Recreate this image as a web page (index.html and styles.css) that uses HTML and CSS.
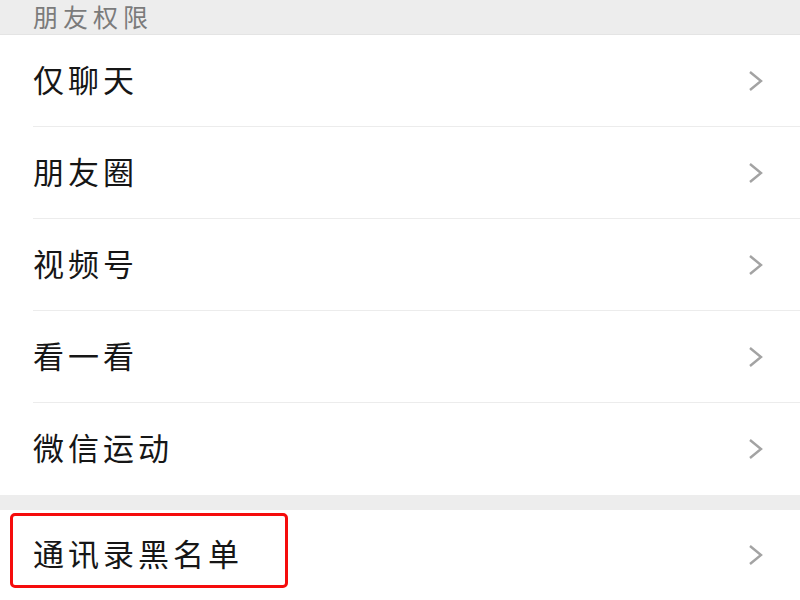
FILE: index.html
```html
<!DOCTYPE html>
<html lang="zh-CN">
<head>
<meta charset="UTF-8" />
<meta name="viewport" content="width=device-width, initial-scale=1" />
<title>朋友权限</title>
<link rel="stylesheet" href="styles.css">
</head>
<body>
<div class="page">
  <div class="section-title">朋友权限</div>
  <ul class="group">
    <li class="row"><span class="label">仅聊天</span><svg class="chevron" viewBox="0 0 16 22"><path d="M2 2 L13 11 L2 20"/></svg></li>
    <li class="row"><span class="label">朋友圈</span><svg class="chevron" viewBox="0 0 16 22"><path d="M2 2 L13 11 L2 20"/></svg></li>
    <li class="row"><span class="label">视频号</span><svg class="chevron" viewBox="0 0 16 22"><path d="M2 2 L13 11 L2 20"/></svg></li>
    <li class="row"><span class="label">看一看</span><svg class="chevron" viewBox="0 0 16 22"><path d="M2 2 L13 11 L2 20"/></svg></li>
    <li class="row"><span class="label">微信运动</span><svg class="chevron" viewBox="0 0 16 22"><path d="M2 2 L13 11 L2 20"/></svg></li>
  </ul>
  <div class="spacer"></div>
  <ul class="group">
    <li class="row marked">
      <span class="label">通讯录黑名单</span><svg class="chevron" viewBox="0 0 16 22"><path d="M2 2 L13 11 L2 20"/></svg>
      <span class="highlight"></span>
    </li>
  </ul>
</div>
</body>
</html>
```

FILE: styles.css
```css
body {
  margin: 0;
  padding: 0;
  background: #fff;
  font-family: "Noto Sans CJK SC", "Noto Sans", sans-serif;
  overflow: hidden;
}
.page {
  width: 800px;
  height: 600px;
  overflow: hidden;
}
.section-title {
  height: 35px;
  box-sizing: border-box;
  background: #ededed;
  color: #7b7b7b;
  font-size: 25px;
  letter-spacing: 5px;
  line-height: 32px;
  padding-left: 33px;
  border-bottom: 1px solid #e4e4e4;
}
.group {
  list-style: none;
  margin: 0;
  padding: 0 0 0 33px;
  background: #fff;
}
.row {
  position: relative;
  height: 92px;
  display: flex;
  align-items: center;
  justify-content: space-between;
  padding-right: 36px;
  border-bottom: 1px solid #ececec;
  box-sizing: border-box;
}
.group .row:last-child {
  border-bottom: none;
}
.label {
  font-size: 31px;
  letter-spacing: 4px;
  color: #161616;
  margin-bottom: 5px;
}
.chevron {
  width: 16px;
  height: 22px;
  fill: none;
  stroke: #a3a3a3;
  stroke-width: 2.4;
}
.spacer {
  height: 15px;
  background: #ededed;
}
.marked {
  height: 90px;
}
.highlight {
  position: absolute;
  left: -23px;
  top: 3px;
  width: 278px;
  height: 75px;
  border: 3px solid #f50c0c;
  border-radius: 5px;
  box-sizing: border-box;
}
```
